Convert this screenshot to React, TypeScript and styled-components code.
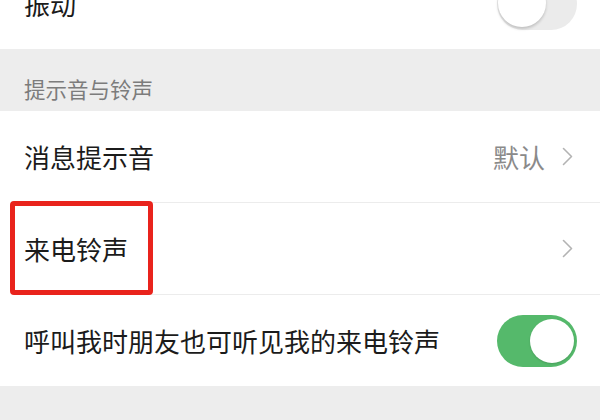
import { FC } from "react";
import styled, { createGlobalStyle } from "styled-components";

const GlobalStyle = createGlobalStyle`
  html, body {
    margin: 0;
    padding: 0;
    background: #ededed;
    overflow: hidden;
  }
  body {
    font-family: "Noto Sans CJK SC", "Noto Sans", sans-serif;
  }
`;

const Page = styled.div`
  width: 600px;
  height: 420px;
  overflow: hidden;
  background: #ededed;
`;

const List = styled.div`
  display: flex;
  flex-direction: column;
  margin-top: -42px;
`;

const Group = styled.div`
  display: flex;
  flex-direction: column;
  background: #ffffff;
`;

const Divider = styled.div`
  height: 1px;
  margin-left: 24px;
  background: #ececec;
`;

const Row = styled.div`
  position: relative;
  display: flex;
  align-items: center;
  height: 91px;
  padding: 0 23px 0 24px;
  background: #ffffff;
`;

const Label = styled.span`
  flex: 1;
  font-size: 26px;
  line-height: 1;
  color: #1b1b1b;
`;

const Value = styled.span`
  font-size: 26px;
  line-height: 1;
  color: #8a8a8a;
  margin-right: 17px;
`;

const Chevron = styled.svg`
  width: 11px;
  height: 19px;
  margin-right: 4px;
  flex-shrink: 0;
`;

const SectionTitle = styled.div`
  display: flex;
  align-items: flex-end;
  height: 62px;
  padding: 0 24px 12px;
  box-sizing: border-box;
  font-size: 21.5px;
  line-height: 1;
  color: #7c7c7c;
`;

const Track = styled.div<{ $on: boolean }>`
  position: relative;
  width: 80px;
  height: 52px;
  border-radius: 26px;
  box-sizing: border-box;
  background: ${(p) => (p.$on ? "#55b96b" : "#ebebeb")};
  flex-shrink: 0;
`;

const Knob = styled.div<{ $on: boolean }>`
  position: absolute;
  top: ${(p) => (p.$on ? "4px" : "1px")};
  left: ${(p) => (p.$on ? "33px" : "1px")};
  width: ${(p) => (p.$on ? "44px" : "48px")};
  height: ${(p) => (p.$on ? "44px" : "48px")};
  border-radius: 50%;
  background: #ffffff;
  box-shadow: ${(p) =>
    p.$on ? "0 1px 2px rgba(0,0,0,0.15)" : "0 2px 3px rgba(0,0,0,0.18)"};
`;

const Highlight = styled.div`
  position: absolute;
  left: 10px;
  top: -2px;
  width: 143px;
  height: 94px;
  border: 5px solid #e9231c;
  border-radius: 4px;
  box-sizing: border-box;
  pointer-events: none;
`;

const ChevronIcon: FC = () => (
  <Chevron viewBox="0 0 11 19">
    <path
      d="M1.5 1.5 L9.5 9.5 L1.5 17.5"
      fill="none"
      stroke="#b3b3b3"
      strokeWidth="1.6"
      strokeLinecap="round"
      strokeLinejoin="round"
    />
  </Chevron>
);

const Switch: FC<{ on: boolean }> = ({ on }) => (
  <Track $on={on}>
    <Knob $on={on} />
  </Track>
);

const App: FC = () => {
  return (
    <Page>
      <GlobalStyle />
      <List>
        <Group>
          <Row>
            <Label>振动</Label>
            <Switch on={false} />
          </Row>
        </Group>

        <SectionTitle>提示音与铃声</SectionTitle>

        <Group>
          <Row>
            <Label>消息提示音</Label>
            <Value>默认</Value>
            <ChevronIcon />
          </Row>
          <Divider />
          <Row>
            <Label>来电铃声</Label>
            <ChevronIcon />
            <Highlight />
          </Row>
          <Divider />
          <Row>
            <Label>呼叫我时朋友也可听见我的来电铃声</Label>
            <Switch on={true} />
          </Row>
        </Group>
      </List>
    </Page>
  );
};

export default App;
